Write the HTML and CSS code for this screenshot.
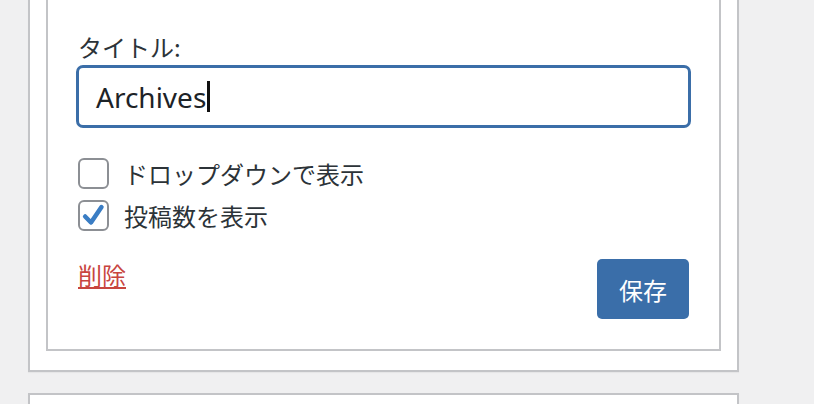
FILE: index.html
```html
<!DOCTYPE html>
<html lang="ja">
<head>
<meta charset="utf-8">
<title>Archives widget</title>
<link rel="stylesheet" href="styles.css">
</head>
<body>
<div class="page">
  <div class="postbox">
    <div class="widget">
      <div class="field-label">タイトル:</div>
      <div class="text-input"><span class="value">Archives</span><span class="caret"></span></div>
      <div class="checks">
        <div class="check-row">
          <span class="checkbox"></span>
          <span class="check-label">ドロップダウンで表示</span>
        </div>
        <div class="check-row">
          <span class="checkbox">
            <svg class="tick" viewBox="0 0 20 20" width="25" height="25"><path d="M3.3 10.8 L8 15.6 L16.4 3.2" fill="none" stroke="#3a7dc4" stroke-width="3.6" stroke-linecap="round" stroke-linejoin="round"/></svg>
          </span>
          <span class="check-label">投稿数を表示</span>
        </div>
      </div>
      <div class="actions">
        <a class="delete-link" href="#">削除</a>
        <button class="save-btn" type="button">保存</button>
      </div>
    </div>
  </div>
  <div class="postbox next"></div>
</div>
</body>
</html>
```

FILE: styles.css
```css
html, body {
  margin: 0;
  padding: 0;
  background: #f0f0f1;
}

body {
  font-family: "Noto Sans", "Noto Sans CJK JP", sans-serif;
  color: #2c3338;
  overflow: hidden;
}

.page {
  margin-top: -29px;
  padding-left: 28px;
}

.postbox {
  box-sizing: border-box;
  width: 711px;
  background: #fff;
  border: 2px solid #c3c4c7;
  box-shadow: 0 1px 1px rgba(0, 0, 0, 0.04);
  padding: 16px 16px 19px 16px;
}

.postbox.next {
  margin-top: 21px;
  height: 60px;
}

.widget {
  border: 2px solid #c3c4c7;
  padding: 40px 28px 30px 28px;
  background: #fff;
}

.field-label {
  font-size: 24px;
  line-height: 32px;
  margin-bottom: 2px;
  padding-left: 2px;
  font-family: "Noto Sans CJK JP", sans-serif;
}

.text-input {
  box-sizing: border-box;
  height: 63px;
  border: 3px solid #3b6ea8;
  border-radius: 7px;
  padding-left: 17px;
  display: flex;
  align-items: center;
  font-size: 28px;
  color: #1d2327;
}

.caret {
  display: inline-block;
  width: 3px;
  height: 31px;
  background: #111;
  margin-left: 1px;
}

.checks {
  margin-top: 30px;
  margin-left: 2px;
  display: flex;
  flex-direction: column;
  gap: 11px;
}

.check-row {
  display: flex;
  align-items: center;
  gap: 15px;
  height: 31px;
}

.checkbox {
  box-sizing: border-box;
  width: 31px;
  height: 31px;
  border: 2px solid #8c8f94;
  border-radius: 6px;
  display: flex;
  align-items: center;
  justify-content: center;
  background: #fff;
}

.check-label {
  font-family: "Noto Sans CJK JP", sans-serif;
  font-size: 24px;
  line-height: 31px;
  color: #2c3338;
}

.actions {
  margin-top: 28px;
  display: flex;
  justify-content: space-between;
  align-items: flex-start;
}

.delete-link {
  font-family: "Noto Sans CJK JP", sans-serif;
  font-size: 24px;
  line-height: 32px;
  margin-left: 2px;
  color: #c8453f;
  text-decoration: underline;
  text-decoration-thickness: 2px;
  text-underline-offset: 2px;
}

.save-btn {
  width: 92px;
  height: 60px;
  margin-right: 2px;
  border: none;
  border-radius: 5px;
  background: #3a6ea9;
  color: #fff;
  font-family: "Noto Sans CJK JP", sans-serif;
  font-size: 24px;
  padding: 0;
}
```
